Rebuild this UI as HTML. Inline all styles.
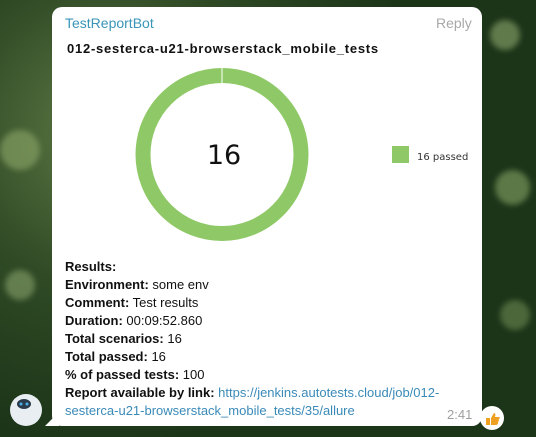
<!DOCTYPE html>
<html><head><style>
html,body{margin:0;padding:0;width:536px;height:437px;overflow:hidden}
body{position:relative;font-family:"Liberation Sans","DejaVu Sans",sans-serif;
background:radial-gradient(circle at 20% 30%,#5f7a45 0,#2f4a25 30%,#1c3418 60%),#24391c;}
.bk{position:absolute;border-radius:50%;filter:blur(3px)}
.bub{position:absolute;left:52px;top:7px;width:430px;height:419px;background:#fff;border-radius:10px}
.tail{position:absolute;left:45px;top:412px;width:14px;height:14px;background:#fff;clip-path:polygon(0 100%,100% 0,100% 100%)}
.name{position:absolute;left:65px;top:15px;font-size:14px;color:#3a95b8}
.reply{position:absolute;left:436px;top:15px;font-size:14px;color:#a8a8a8}
.title{position:absolute;left:67px;top:41px;font-size:13px;font-weight:bold;color:#111;letter-spacing:.75px}
.lines{position:absolute;left:65px;top:258px;font-size:13px;line-height:18px;color:#111}
.lines b{font-weight:bold}
a{color:#3a8ab8;text-decoration:none}
.time{position:absolute;left:447px;top:407px;font-size:13px;color:#a0a0a0}
</style></head><body>
<div class="bk" style="left:0;top:130px;width:40px;height:40px;background:#8fa86a;opacity:.6"></div>
<div class="bk" style="left:5px;top:270px;width:30px;height:30px;background:#9ab47a;opacity:.5"></div>
<div class="bk" style="left:490px;top:20px;width:30px;height:30px;background:#a4c080;opacity:.5"></div>
<div class="bk" style="left:495px;top:170px;width:35px;height:35px;background:#9cbc76;opacity:.5"></div>
<div class="bk" style="left:500px;top:300px;width:30px;height:30px;background:#6d8a52;opacity:.6"></div>
<div class="bub"></div>
<div class="tail"></div>
<div class="name">TestReportBot</div>
<div class="reply">Reply</div>
<div class="title">012-sesterca-u21-browserstack_mobile_tests</div>
<svg style="position:absolute;left:0;top:0" width="536" height="437">
<circle cx="222" cy="154.5" r="79" fill="none" stroke="#8fc967" stroke-width="15"/>
<line x1="222" y1="67" x2="222" y2="83" stroke="#fff" stroke-width="1"/>
<text x="224" y="164" font-size="27" text-anchor="middle" font-family="DejaVu Sans,sans-serif" fill="#111">16</text>
<rect x="392" y="146" width="17" height="17" fill="#8fc967"/>
<text x="417" y="160" font-size="10" font-family="DejaVu Sans,sans-serif" fill="#333">16 passed</text>
<circle cx="26" cy="410" r="16" fill="#e8eef2"/>
<ellipse cx="24" cy="404" rx="7" ry="5" fill="#2a3a4a"/>
<circle cx="21" cy="404" r="1.5" fill="#4ab0e8"/><circle cx="27" cy="404" r="1.5" fill="#4ab0e8"/>
<circle cx="492" cy="418" r="12" fill="#fff"/>
<path d="M486 418h4v7h-4zM491 418l3-5c1 0 2 1 1 4h4c1 0 1 2 0 2l-1 4c0 1-1 2-2 2h-5z" fill="#f0a020"/>
</svg>
<div class="lines">
<b>Results:</b><br>
<b>Environment:</b> some env<br>
<b>Comment:</b> Test results<br>
<b>Duration:</b> 00:09:52.860<br>
<b>Total scenarios:</b> 16<br>
<b>Total passed:</b> 16<br>
<b>% of passed tests:</b> 100<br>
<b>Report available by link:</b> <a>https://jenkins.autotests.cloud/job/012-</a><br>
<a>sesterca-u21-browserstack_mobile_tests/35/allure</a>
</div>
<div class="time">2:41</div>
</body></html>
